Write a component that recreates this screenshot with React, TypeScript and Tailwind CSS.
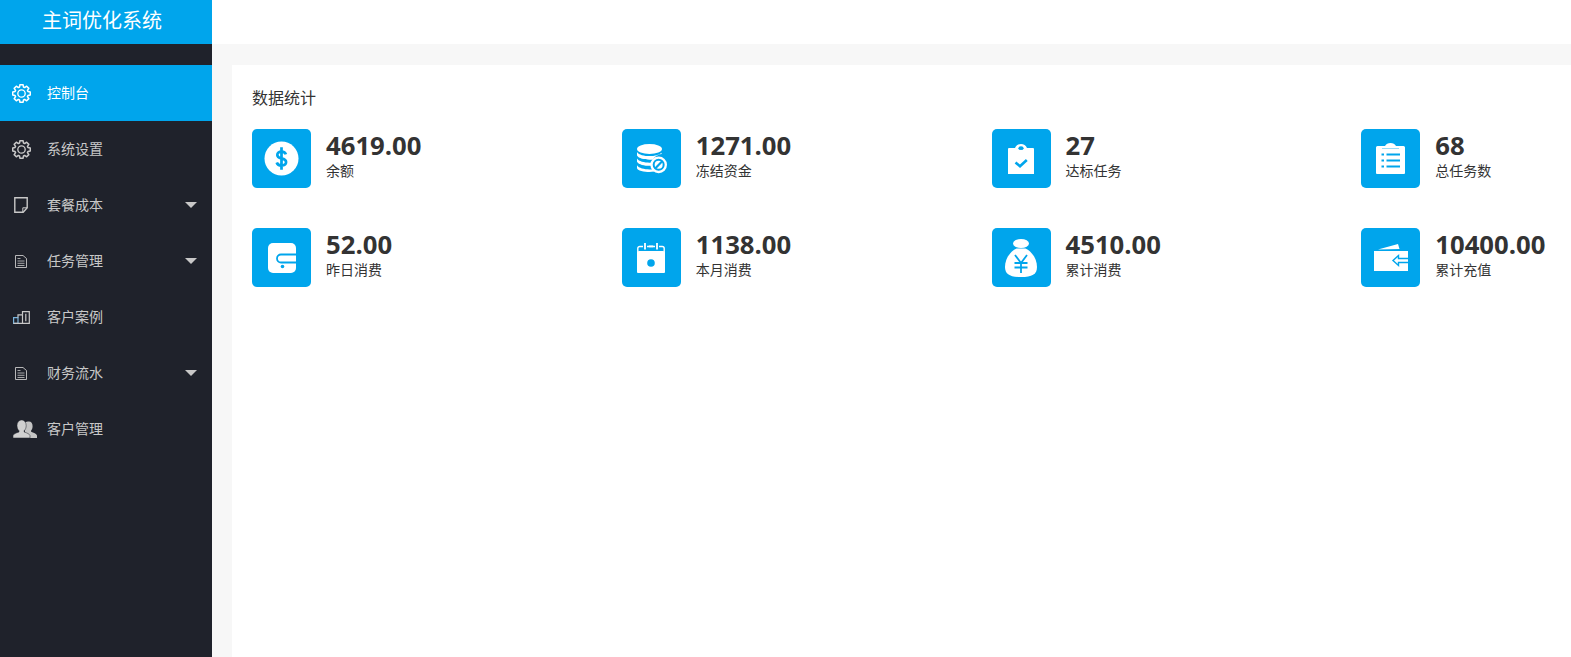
import React from "react";

// outline of an 8 tooth gear, in a 20x20 box
const gearPath = () => {
  const pts: string[] = [];
  for (let i = 0; i < 8; i++) {
    const a = (i * Math.PI) / 4;
    const p = (r: number, d: number) => {
      const x = 10 + r * Math.cos(a + d);
      const y = 10 + r * Math.sin(a + d);
      return `${x.toFixed(2)} ${y.toFixed(2)}`;
    };
    pts.push(p(7.1, -0.3), p(9.4, -0.17), p(9.4, 0.17), p(7.1, 0.3));
  }
  return `M${pts.join("L")}Z`;
};

const GearIcon = ({ className }: { className: string }) => (
  <svg viewBox="0 0 20 20" className={className} fill="none" stroke="currentColor" strokeWidth="1.6" strokeLinejoin="round">
    <path d={gearPath()} />
    <circle cx="10" cy="10" r="3.900" strokeWidth="1.400" />
  </svg>
);

const NoteIcon = ({ className }: { className: string }) => (
  <svg viewBox="0 0 14 16" className={className} fill="none" stroke="currentColor" strokeWidth="1.4">
    <path d="M.8.8h12.400v10l-4 4.400H.8z" />
    <path d="M8.800 15v-4.200h4.400" strokeWidth="1" />
  </svg>
);

const DocIcon = ({ className }: { className: string }) => (
  <svg viewBox="0 0 12 13" className={className} fill="none" stroke="currentColor" strokeWidth="0.9">
    <path d="M.5.5h7.500l3.500 3v9H.5z" />
    <path d="M2.500 3.500h3M2.500 6h7M2.500 8.300h7M2.500 10.500h7" strokeWidth="0.8" />
  </svg>
);

const BuildingIcon = ({ className }: { className: string }) => (
  <svg viewBox="0 0 17 13" className={className} fill="none" strokeWidth="1.2">
    <path d="M.6 12.400V6.600h4.400v5.800z" stroke="#7ab4dc" />
    <path d="M5 6.600V3.800h4.500v8.600H.6" stroke="#c8c8c8" />
    <path d="M9.500 3.800V.7h6.800v11.700H9.500" stroke="#c8c8c8" />
    <path d="M12.800 2.800v7.500" stroke="#c8c8c8" />
  </svg>
);

const UsersIcon = ({ className }: { className: string }) => (
  <svg viewBox="0 0 24 18" className={className}>
    <path d="M16 1.500c2.200 0 3.600 2 3.600 4.700 0 1.800-.6 3.300-1.500 4.300v1.300c2.400.8 5.400 2 5.900 3.700V18H12V2.500c1-.6 2.400-1 4-1z" fill="#c4c4c4" />
    <path d="M8.700 0c2.700 0 4.500 2.400 4.500 5.600 0 2.200-.8 4-2 5.100v1.300c2.900 1 5.400 2 5.800 3.600V18H0v-2.400c.4-1.600 3-2.600 6-3.600v-1.300C4.800 9.600 4 7.800 4 5.600 4 2.400 6 0 8.700 0z" fill="#d0d0d0" stroke="#1f222b" strokeWidth="0.5" />
  </svg>
);

const Caret = () => <span className="ml-auto mr-[15px] h-0 w-0 border-x-[6px] border-t-[6px] border-x-transparent border-t-[#c8c8c8]" />;

const DollarIcon = () => (
  <svg viewBox="0 0 36 36" className="h-[35px] w-[35px]">
    <circle cx="18" cy="18" r="17.500" fill="#fff" />
    <path d="M22.500 13.800c-.5-1.800-2.300-2.900-4.500-2.900-2.600 0-4.300 1.300-4.300 3.400 0 2.300 2 3 4.300 3.600 2.400.6 4.700 1.400 4.700 3.800 0 2.200-1.900 3.500-4.700 3.500-2.400 0-4.300-1.100-4.900-3.100M18 6.500v23" fill="none" stroke="#00a5ec" strokeWidth="2.800" />
  </svg>
);

const DatabaseIcon = () => (
  <svg viewBox="0 0 36 36" className="ml-px h-[30px] w-[30px]" fill="#fff">
    <ellipse cx="15" cy="6" rx="15" ry="6" />
    <path d="M0 9.500c2 3.500 9 5 15 5s11.500-1 14.500-4v1.500c-4 .5-8.500 3-10 6.500-1.500.3-3 .4-4.500.4-6 0-13-1.500-15-5z" />
    <path d="M0 17.500c2 3.500 9 5 15 5 1 0 2 0 3-.2-.2 1.200-.2 2.500 0 3.700-1 .1-2 .2-3 .2-6 0-13-1.500-15-5z" />
    <path d="M0 25.500c2 3.500 9 5 15 5 1.300 0 2.700 0 4-.3.5 1 1.100 2 1.800 2.900-2 .4-4 .6-5.800.6-6 0-15-2-15-5z" />
    <circle cx="26" cy="25" r="10" />
    <circle cx="26" cy="25" r="6" fill="none" stroke="#00a5ec" strokeWidth="2.400" />
    <path d="M21.800 29.300l8.400-8.600" stroke="#00a5ec" strokeWidth="2.600" />
  </svg>
);

const ClipboardCheckIcon = () => (
  <svg viewBox="0 0 26 30" className="h-[30px] w-[26px]">
    <path d="M1 4h6C8 1.500 10.300 0 13 0s5 1.500 6 4h6a1 1 0 0 1 1 1v25H0V5a1 1 0 0 1 1-1z" fill="#fff" />
    <ellipse cx="13" cy="4.200" rx="2.600" ry="1.900" fill="#00a5ec" />
    <path d="M7.500 18.500l4.500 3.800 6.800-6.300" fill="none" stroke="#00a5ec" strokeWidth="2.600" />
  </svg>
);

const ClipboardListIcon = () => (
  <svg viewBox="0 0 29 31" className="h-[31px] w-[29px]">
    <path d="M1.500 3H9C10 1 12 0 14.500 0S19 1 20 3h7.500A1.500 1.500 0 0 1 29 4.500V30a1 1 0 0 1-1 1H1a1 1 0 0 1-1-1V4.500A1.500 1.500 0 0 1 1.500 3z" fill="#fff" />
    <path d="M6 5.500h17" stroke="#7fd2f5" strokeWidth="0.8" />
    <path d="M5.500 11.500h2.500M10.500 11.500H24M5.500 17.500h2.500M10.500 17.500H24M5.500 23.500h2.500M10.500 23.500H24" stroke="#00a5ec" strokeWidth="2.200" />
  </svg>
);

const WalletIcon = () => (
  <svg viewBox="0 0 28 30" className="h-[30px] w-7">
    <path d="M5 0h18a5 5 0 0 1 5 5v20a5 5 0 0 1-5 5H5a5 5 0 0 1-5-5V5a5 5 0 0 1 5-5z" fill="#fff" />
    <path d="M28 11.500H13a4 4 0 0 0 0 8h15" fill="none" stroke="#00a5ec" strokeWidth="1.800" />
    <circle cx="14.500" cy="23.500" r="1.800" fill="#00a5ec" />
  </svg>
);

const CalendarIcon = () => (
  <svg viewBox="0 0 28 30" className="h-[30px] w-7">
    <path d="M2 8h24a2 2 0 0 1 2 2v19a1 1 0 0 1-1 1H1a1 1 0 0 1-1-1V10a2 2 0 0 1 2-2z" fill="#fff" />
    <path d="M.8 10V5.500a2 2 0 0 1 2-2h22.400a2 2 0 0 1 2 2V10" fill="none" stroke="#fff" strokeWidth="1.400" />
    <path d="M8 0v6.500M20 0v6.500" stroke="#00a5ec" strokeWidth="4" />
    <path d="M8 0v6.500M20 0v6.500M11.800 3.400h4.400" stroke="#fff" strokeWidth="1.800" />
    <circle cx="14" cy="20" r="3.800" fill="#00a5ec" />
  </svg>
);

const MoneyBagIcon = () => (
  <svg viewBox="0 0 32 38" className="h-[38px] w-8">
    <ellipse cx="16" cy="4.500" rx="8" ry="4.500" fill="#fff" />
    <path d="M11.500 9.500h9C27 12.500 32 20 32 28c0 7.500-5 10-16 10S0 35.500 0 28c0-8 5-15.500 11.500-18.500z" fill="#fff" />
    <path d="M10 16l6 8 6-8M9.500 24h13M9.500 28.500h13M16 24v10" fill="none" stroke="#00a5ec" strokeWidth="1.800" />
  </svg>
);

const PurseIcon = () => (
  <svg viewBox="0 0 34 27" className="h-[27px] w-[34px]">
    <path d="M4 5.500L24 0l1.500 5z" fill="#fff" />
    <path d="M0 7h34v20H0z" fill="#fff" />
    <path d="M34 14.500h-9.500v-3l-5.500 5 5.500 5v-3H34" fill="none" stroke="#00a5ec" strokeWidth="1.400" />
  </svg>
);

const menu = [
  { label: "控制台", icon: <GearIcon className="h-[19px] w-[19px]" />, active: true },
  { label: "系统设置", icon: <GearIcon className="h-[19px] w-[19px]" /> },
  { label: "套餐成本", icon: <NoteIcon className="h-4 w-[14px]" />, caret: true },
  { label: "任务管理", icon: <DocIcon className="h-[13px] w-3" />, caret: true },
  { label: "客户案例", icon: <BuildingIcon className="h-[13px] w-[17px]" /> },
  { label: "财务流水", icon: <DocIcon className="h-[13px] w-3" />, caret: true },
  { label: "客户管理", icon: <UsersIcon className="ml-2 h-[18px] w-6 shrink-0" /> },
];

const stats = [
  { value: "4619.00", label: "余额", icon: <DollarIcon /> },
  { value: "1271.00", label: "冻结资金", icon: <DatabaseIcon /> },
  { value: "27", label: "达标任务", icon: <ClipboardCheckIcon /> },
  { value: "68", label: "总任务数", icon: <ClipboardListIcon /> },
  { value: "52.00", label: "昨日消费", icon: <WalletIcon /> },
  { value: "1138.00", label: "本月消费", icon: <CalendarIcon /> },
  { value: "4510.00", label: "累计消费", icon: <MoneyBagIcon /> },
  { value: "10400.00", label: "累计充值", icon: <PurseIcon /> },
];

export default function App() {
  return (
    <div className="flex h-[657px] w-[1571px] overflow-hidden bg-white font-['Open_Sans','Noto_Sans_CJK_SC',sans-serif] text-[#333]">
      <aside className="w-[212px] shrink-0 bg-[#1f222b]">
        <div className="h-11 bg-[#00a5ec] pr-2 text-center text-[20px] leading-[42px] text-white">主词优化系统</div>
        <nav className="mt-[21px]">
          {menu.map((item) => (
            <div
              key={item.label}
              className={`flex h-14 items-center text-sm ${item.active ? "bg-[#00a5ec] text-white" : "text-[#c8c8c8]"}`}
            >
              <span className="flex w-[47px] shrink-0 items-center justify-center pr-[5px]">{item.icon}</span>
              <span>{item.label}</span>
              {item.caret && <Caret />}
            </div>
          ))}
        </nav>
      </aside>
      <main className="flex min-w-0 flex-1 flex-col">
        <div className="h-11 shrink-0 bg-white" />
        <div className="flex-1 overflow-hidden bg-[#f7f7f7] pl-5 pt-[21px]">
          <section className="h-full bg-white pl-5 pt-[21px]">
            <h2 className="text-base leading-6">数据统计</h2>
            <div className="mt-[19px] grid grid-cols-[repeat(4,369.75px)] gap-y-10">
              {stats.map((s) => (
                <div key={s.label} className="flex items-start">
                  <div className="flex h-[59px] w-[59px] shrink-0 items-center justify-center rounded-[5px] bg-[#00a5ec]">{s.icon}</div>
                  <div className="ml-[15px]">
                    <div className="text-[25.7px] font-bold leading-[34px]">{s.value}</div>
                    <div className="text-sm leading-[16px]">{s.label}</div>
                  </div>
                </div>
              ))}
            </div>
          </section>
        </div>
      </main>
    </div>
  );
}
